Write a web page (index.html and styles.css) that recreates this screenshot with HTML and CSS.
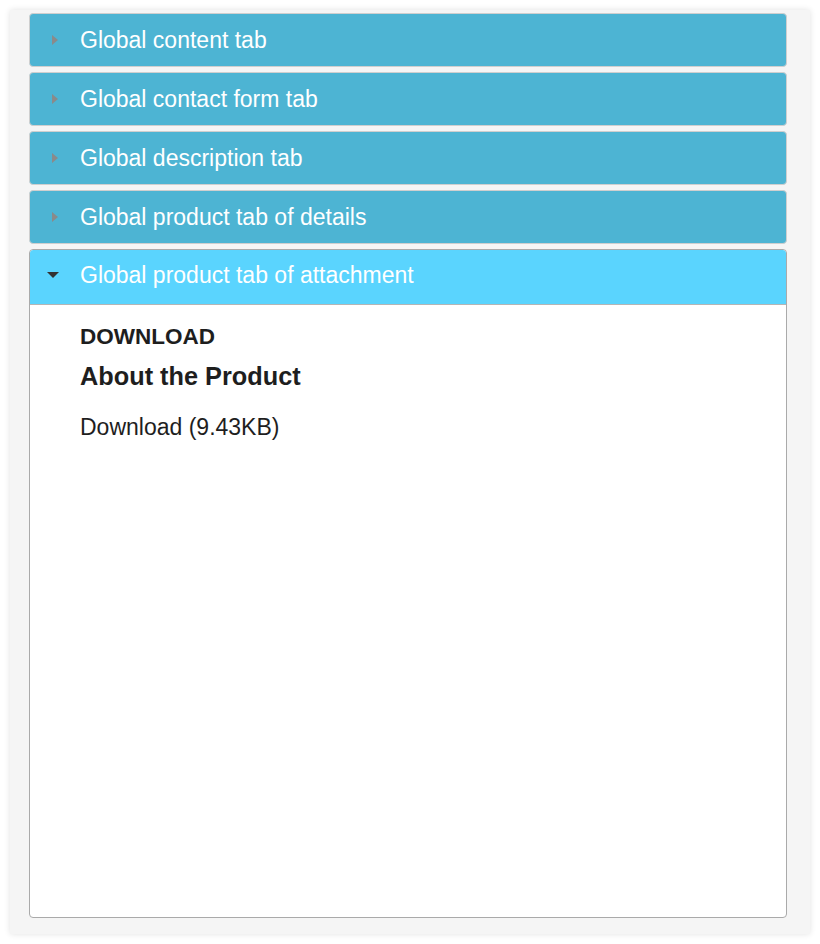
FILE: index.html
```html
<!DOCTYPE html>
<html>
<head>
<meta charset="utf-8">
<link rel="stylesheet" href="styles.css">
</head>
<body>
<div class="wrap">
  <div class="accordion">
    <div class="tab"><span class="arrow right"></span><span class="title">Global content tab</span></div>
    <div class="tab"><span class="arrow right"></span><span class="title">Global contact form tab</span></div>
    <div class="tab"><span class="arrow right"></span><span class="title">Global description tab</span></div>
    <div class="tab"><span class="arrow right"></span><span class="title">Global product tab of details</span></div>
    <div class="panel">
      <div class="tab active"><span class="arrow down"></span><span class="title">Global product tab of attachment</span></div>
      <div class="body">
        <h4 class="label">DOWNLOAD</h4>
        <h3 class="heading">About the Product</h3>
        <p class="link">Download (9.43KB)</p>
      </div>
    </div>
  </div>
</div>
</body>
</html>
```
FILE: styles.css
```css
html, body { margin: 0; padding: 0; background: #fff; }
body { font-family: "Liberation Sans", Arial, sans-serif; padding: 10px; }
.wrap {
  background: #f5f5f5;
  box-shadow: 0 0 6px rgba(0,0,0,0.12);
  padding: 3px 23px 16px 19px;
  height: 924px;
  box-sizing: border-box;
  width: 800px;
}
.accordion { display: flex; flex-direction: column; gap: 5px; height: 100%; }
.tab {
  background: #4db4d3;
  border: 1px solid #cfcfcf;
  border-radius: 4px;
  height: 54px;
  box-sizing: border-box;
  display: flex;
  align-items: center;
  color: #fff;
  font-size: 23px;
}
.tab.active {
  background: #5ad4fe;
  border: none;
  border-bottom: 1px solid #b5b5b5;
  border-radius: 3px 3px 0 0;
  height: 55px;
  padding-bottom: 4px;
}
.arrow { width: 0; height: 0; margin-left: 22px; }
.arrow.right {
  border-top: 5px solid transparent;
  border-bottom: 5px solid transparent;
  border-left: 6px solid #8a8a8a;
  margin-right: 22px;
}
.tab.active .arrow { margin-left: 17px; margin-right: 21px; }
.arrow.down {
  border-left: 6px solid transparent;
  border-right: 6px solid transparent;
  border-top: 6px solid #333;
}
.title { line-height: 1; }
.panel {
  flex: 1;
  border: 1px solid #aaa;
  border-radius: 4px;
  background: #fff;
  display: flex;
  flex-direction: column;
  overflow: hidden;
}
.body { padding: 20px 50px; color: #1e1e1e; }
.label { margin: 0; font-size: 22.5px; font-weight: bold; line-height: 24px; }
.heading { margin: 13px 0 0; font-size: 25.3px; font-weight: bold; line-height: 28px; }
.link { margin: 24px 0 0; font-size: 23px; line-height: 26px; }
```
